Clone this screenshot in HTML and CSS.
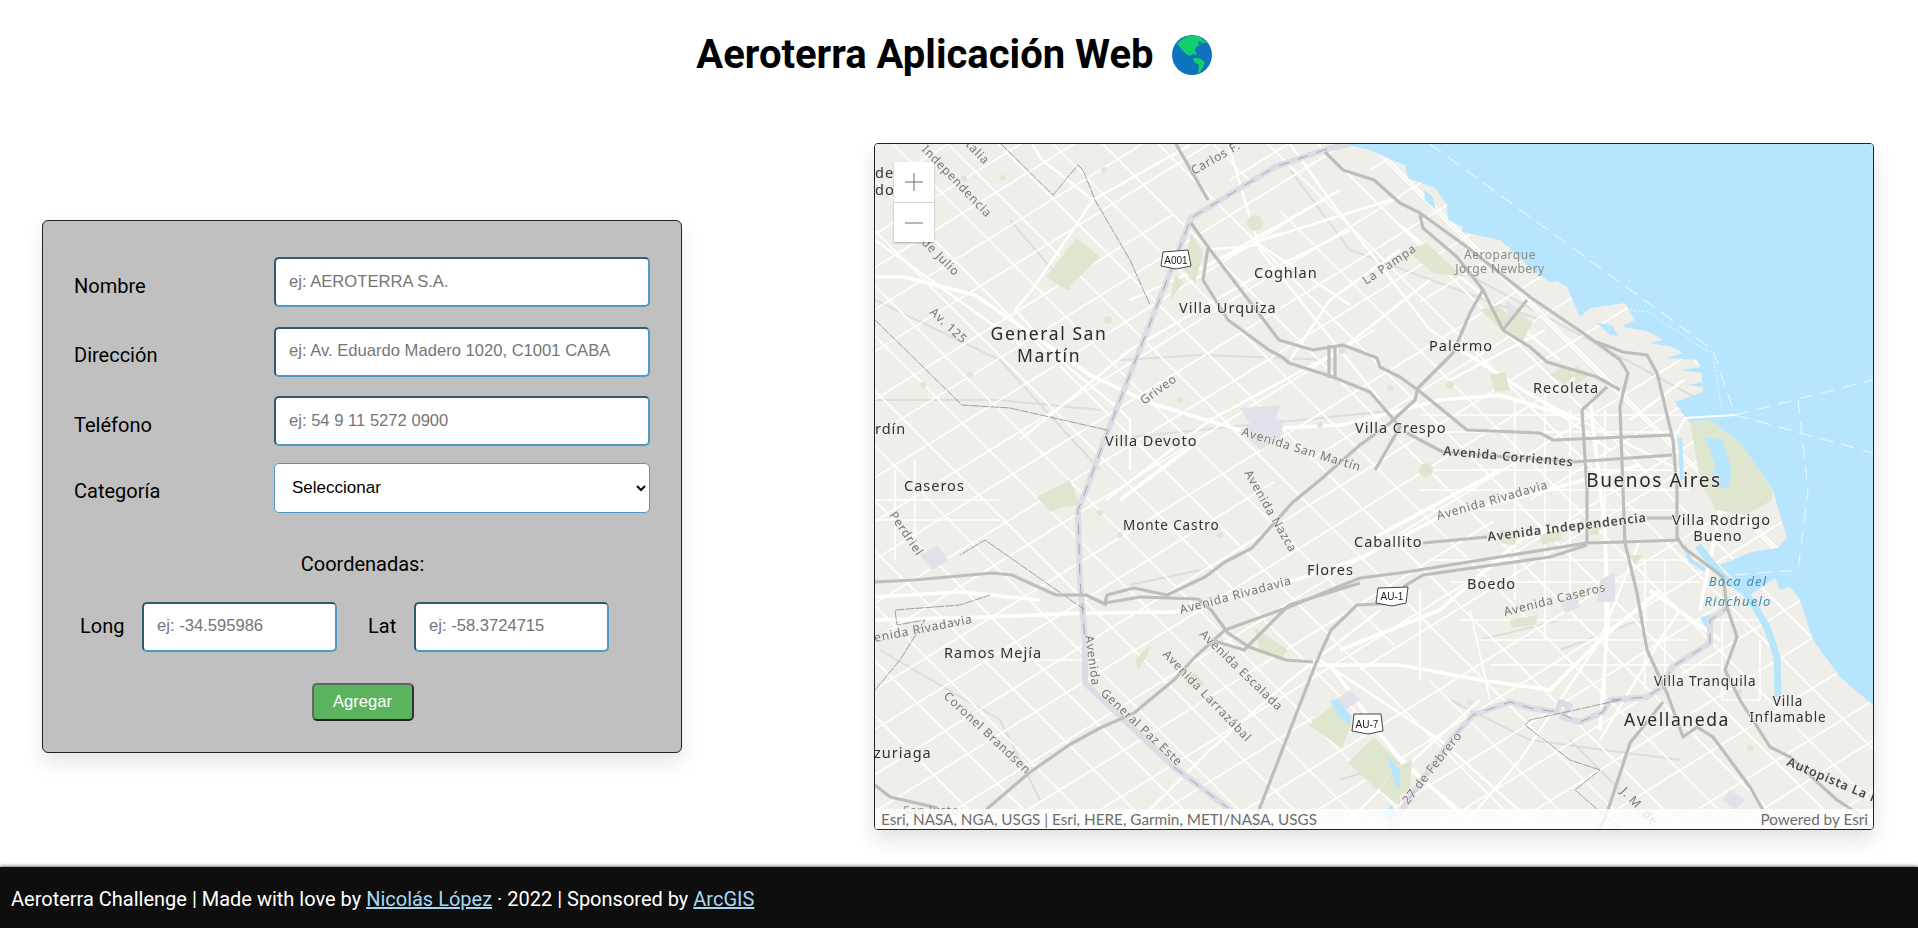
FILE: index.html
```html
<!DOCTYPE html>
<html lang="es">
<head>
<meta charset="utf-8">
<title>Aeroterra Aplicación Web</title>
<link rel="stylesheet" href="styles.css">
</head>
<body>
<header class="top">
  <h1 class="title">Aeroterra Aplicación Web
    <svg class="globe" viewBox="0 0 40 40" aria-hidden="true">
      <circle cx="20" cy="20" r="20" fill="#0f72bc"/>
      <path fill="#12cf6e" d="M5 9 9 5 17 .5 27 1.5 35 8 30 8 27 6 26 9 29 10 25 11 23 15 25 20 21 19 18 21 14 19 10 15 7 11Z"/>
      <path fill="#12cf6e" d="M21 23 27 23 33 27 31 32 28 37 26 38 27 30 22 27Z"/>
    </svg>
  </h1>
</header>
<main class="content">
  <form class="card">
    <div class="row"><label class="lab">Nombre</label><input class="field" placeholder="ej: AEROTERRA S.A."></div>
    <div class="row"><label class="lab">Dirección</label><input class="field" placeholder="ej: Av. Eduardo Madero 1020, C1001 CABA"></div>
    <div class="row"><label class="lab">Teléfono</label><input class="field" placeholder="ej: 54 9 11 5272 0900"></div>
    <div class="row pickrow"><label class="lab">Categoría</label><select class="pick"><option>Seleccionar</option></select></div>
    <p class="coord">Coordenadas:</p>
    <div class="pair">
      <label class="sub">Long</label><input class="field small" placeholder="ej: -34.595986">
      <label class="sub lat">Lat</label><input class="field small" placeholder="ej: -58.3724715">
    </div>
    <div class="actions"><button class="add" type="button">Agregar</button></div>
  </form>
  <section class="map">
    <svg class="base" viewBox="875 144 998 685" width="998" height="685" aria-label="Mapa de Buenos Aires">
      <rect x="875" y="144" width="998" height="685" fill="#efeee8"/>
      <g class="rail">
        <path d="M875 300 1000 360 1100 470M1010 220 1070 290M1120 360 1200 355 1330 360M875 400 1000 400 1100 410M1100 440 1400 410M1290 170 1350 250 1540 320M1460 270 1700 400M880 650 1000 720 1040 800M1200 570 1130 585M1480 640 1560 620M1560 650 1640 620M1450 700 1530 740 1680 760M1570 740 1620 790M1340 780 1400 760"/>
      </g>
      <g class="street s1">
        <path d="M874 190l400-248M874 235l500-310M874 268l640-397M874 310l420-260M1320 24l200-124M874 352l800-496M874 400l300-186M1230 180l400-248M874 436l880-546M874 478l460-285M1370 170l420-260M874 522l1000-620M874 560l620-384M1530 155l340-211M874 604l1000-620M874 640l500-310M1420 302l450-279M874 690l1000-620M874 730l400-248M1310 460l560-347M874 775l1000-620M874 812l700-434M874 860l1000-620M874 905l620-384M1530 500l340-211M874 950l1000-620M874 990l440-273M1360 670l510-316M874 1040l1000-620M874 1085l1000-620M874 1130l1000-620M874 1175l1000-620M874 1220l1000-620M874 1270l1000-620M874 1320l1000-620M874 1360l1000-620M874 1410l1000-620M874 1450l1000-620"/>
        <path d="M874-950l1000 1000M874-890l1000 1000M874-840l1000 1000M874-780l1000 1000M874-730l1000 1000M874-675l1000 1000M874-625l1000 1000M874-560l400 400M1310-130l450 450M874-510l1000 1000M874-460l1000 1000M874-405l400 400M1310 85l500 500M874-355l1000 1000M874-300l1000 1000M874-250l1000 1000M874-195l380 380M1280 211l590 590M874-140l1000 1000M874-85l1000 1000M874-35l1000 1000M874 20l1000 1000M874 70l1000 1000M874 125l520 520M1430 681l420 420M874 180l1000 1000M874 230l1000 1000M874 285l1000 1000M874 335l1000 1000M874 390l1000 1000M874 445l1000 1000M874 500l1000 1000M874 550l1000 1000M874 605l1000 1000M874 660l1000 1000M874 715l1000 1000"/>
        <path d="M1420 415H1690M1420 432H1680M1420 470H1680M1420 490H1690M1420 510H1680M1430 560H1700M1450 582H1700M1460 620H1720M1480 640H1690M1490 665H1720M1515 400V600M1545 390V640M1570 410V610M1605 410V700M1645 560V690M1665 560V680M895 470V560M915 460V540M875 500H1000M875 520H1000M1000 660H1100M1420 590V680M1470 610 1490 700M1722 620V700M1760 640V700M1722 620H1760M1722 700H1760"/>
      </g>
      <g class="street s2">
        <path d="M1032 144 1042 160 1093 200 1032 290 1015 310 1066 365 1120 410 1130 420 1130 470M1228 144 1260 250 1300 300 1380 400M1290 144 1330 200 1430 330 1540 400 1610 450M875 240 1000 330 1020 345M1093 200 1190 145M1130 300 1262 240 1400 197M1205 250 1260 245 1350 305M1200 270 1340 190M1400 225 1470 285 1560 360M1460 350 1530 395 1600 430 1680 470M1020 440 1130 350 1250 280 1350 230M1106 500 1210 420 1340 350 1430 280M1290 360 1330 300 1400 250M1450 380 1545 330M1630 420 1684 380M1640 540 1600 640 1560 700 1520 760 1460 829M1320 660 1440 740 1540 829M1680 610 1660 640 1600 740M1380 610 1290 680 1210 750 1130 829M1480 700 1380 790 1340 829"/>
      </g>
      <g class="street s3">
        <path d="M875 277 904 277 975 295 1040 340 1090 375 1150 403 1240 430 1342 425 1440 400 1500 395 1580 420M875 620 985 617 1086 613 1174 612 1295 580 1363 557 1438 518 1547 490 1640 465M875 597 960 592 1040 600M1120 500 1200 440M1370 540 1500 470M1590 400 1605 530 1608 620 1600 730M1310 665 1400 665 1480 680 1550 690 1600 640 1660 590M1650 590 1720 640M1480 829 1400 760 1330 665M1340 650 1440 610 1520 540 1580 520M1720 510 1700 610"/>
      </g>
      <g class="park">
        <path d="M1046 277 1076 238 1100 257 1066 290ZM1191 233 1203 253 1195 283 1184 270ZM1175 275 1184 282 1170 300ZM1407 250 1427 243 1453 268 1467 277 1433 273ZM1480 310 1497 305 1512 317 1502 330ZM1507 330 1518 313 1533 322 1523 340ZM1036 497 1070 480 1080 505 1060 508 1050 512ZM1308 725 1337 702 1352 723 1342 748ZM1348 763 1374 737 1400 763 1377 790ZM1379 790 1400 763V805ZM1260 650 1255 628 1288 650 1280 660ZM1185 680 1195 672 1205 685 1195 690ZM1135 660 1150 645 1148 655 1138 670ZM1490 375 1505 372 1510 390 1495 392ZM1550 375 1565 365 1575 375 1565 385ZM1575 365 1590 375 1575 385ZM1540 535 1560 530 1562 540 1542 545ZM1500 530 1520 530 1515 545 1500 543ZM1628 555 1642 555 1636 565ZM1510 620 1538 615 1535 625 1512 628ZM1590 520 1600 520 1598 535 1590 535ZM1390 770 1412 760 1410 790 1390 800Z"/>
        <circle cx="1255" cy="223" r="8"/><circle cx="1426" cy="470" r="7"/><circle cx="1108" cy="320" r="4"/><circle cx="1003" cy="178" r="3"/><circle cx="964" cy="179" r="3"/><circle cx="1104" cy="170" r="3"/><circle cx="970" cy="375" r="3"/><circle cx="923" cy="385" r="3"/><circle cx="1180" cy="400" r="3"/><circle cx="1320" cy="425" r="3"/><circle cx="1390" cy="388" r="3"/><circle cx="1450" cy="385" r="4"/><circle cx="1342" cy="350" r="4"/><circle cx="1100" cy="513" r="3"/><circle cx="1120" cy="535" r="3"/><circle cx="1220" cy="535" r="3"/><circle cx="1750" cy="500" r="3"/><circle cx="1470" cy="702" r="3"/><circle cx="1739" cy="692" r="3"/><circle cx="1750" cy="748" r="3"/>
      </g>
      <g class="lilac">
        <path d="M1505 300 1520 310 1510 320ZM1240 430l26-12 18 2-4 20-20 10ZM1600 580l15-8v30l-18 0ZM920 555l18-10 10 15-16 10ZM1335 700 1350 690 1360 700 1345 710ZM1560 600l15-5 5 12-15 6ZM1730 790l15 10-10 10-12-10Z"/>
        <path d="M1240 408 1280 405 1272 430 1255 432Z"/>
      </g>
      <path class="water" d="M1345 144 1352 146 1370 150 1392 160 1405 165 1408 178 1435 188 1447 205 1448 220 1463 227 1462 232 1500 240 1535 272 1550 282 1557 281 1567 287 1580 317 1590 308 1625 303 1635 320 1622 327 1647 331 1663 340 1650 343 1673 347 1683 353 1667 358 1697 360 1700 367 1680 370 1702 373 1702 382 1688 385 1703 387 1703 392 1675 402 1685 417 1690 422 1710 420 1740 443 1773 490 1780 515 1787 537 1778 548 1752 552 1745 565 1775 578 1780 590 1790 587 1800 600 1813 640 1840 677 1873 705 1874 705 1874 144Z"/>
      <path class="water" d="M1597 323 1612 325 1618 336 1610 335ZM1720 565 1752 552 1775 578 1750 595ZM1424 190 1432 196 1436 210 1425 200ZM1330 700 1338 700 1352 717 1350 725 1338 715ZM1387 755 1400 770V790L1395 785ZM1380 815 1392 805 1400 825ZM1700 617 1712 615 1712 628 1705 626Z"/>
      <path class="channel" d="M1698 546 1723 577 1745 592 1757 610 1767 627 1777 657 1778 697"/>
      <path class="channel thin" d="M1680 438 1682 480M1684 545 1690 560 1705 570"/>
      <path class="park" d="M1690 422 1710 420 1740 443 1773 490 1772 500 1745 515 1715 510 1700 480 1695 450Z"/>
      <path class="water" d="M1705 437 1722 440 1732 470 1728 488 1710 488 1715 465Z"/>
      <g class="limit">
        <path class="dash" d="M1430 144 1713 350 1735 415M1735 415 1873 380M1735 415 1873 453M1798 400 1808 490 1798 570 1735 575"/>
        <path class="solid" d="M1672 442 1685 418 1735 415"/>
        <path class="thinl" d="M1630 310 1650 312 1670 328M1670 326 1705 350 1712 352 1722 410"/>
      </g>
      <path class="border" d="M1390 829 1408 800 1453 737 1473 715 1510 702 1530 708 1557 712 1560 702 1570 706 1562 717 1580 722 1603 712 1610 700 1647 697 1662 687 1672 667 1710 643 1710 620 1727 608"/>
      <path class="border" d="M1350 144 1327 149 1275 167 1191 218 1171 270 1107 433 1086 490 1078 510 1080 580 1085 640 1085 683 1174 767 1228 808 1255 829"/>
      <path class="dashc" d="M1408 800 1453 737 1473 715 1510 702 1530 708 1557 712 1580 722 1603 712 1610 700 1647 697 1662 687 1672 667 1710 643 1710 620 1727 608"/>
      <path class="dashc" d="M1327 149 1275 167 1191 218 1171 270 1107 433 1086 490 1078 510 1080 580 1085 640M1174 767 1228 808"/>
      <path class="admin" d="M1001 144 1053 195 1078 165 1083 170 1095 200 1130 260 1150 305M875 320 962 405 1010 408 1107 430M1085 610 985 540 960 555M875 690 900 660 925 620 897 625 895 610 960 605 990 595M1620 700 1530 720 1525 725 1570 760 1600 770 1575 790 1620 829"/>
      <g class="hw">
        <path d="M1176 144 1208 200M1325 152 1343 170 1374 180 1400 203 1420 213 1467 247 1530 297 1583 333 1597 343 1620 360 1628 373 1623 393 1620 407 1623 490 1625 543 1637 593 1647 650 1667 693 1683 737 1697 727 1713 737 1750 787 1763 810 1775 829"/>
        <path d="M1597 342 1623 352 1647 355 1657 373 1673 440 1677 490 1677 537 1683 547 1723 577 1727 607 1737 637 1725 670 1740 700 1770 747 1790 757 1837 800 1857 813 1873 829"/>
        <path d="M1420 215 1423 228 1457 257 1483 290 1470 313 1453 353 1418 388 1415 400 1390 423 1360 445 1320 480 1292 503 1252 548 1225 562 1205 577 1167 595 1134 588 1107 595 1105 603 1140 597 1198 599 1211 610 1228 633 1249 647 1286 660 1313 662"/>
        <path d="M875 582 914 580 992 573 1012 575 1056 595 1086 595 1107 605"/>
        <path d="M1191 223 1208 247 1203 280 1228 320 1269 350 1282 357 1289 363 1333 377 1370 392 1400 427 1375 470"/>
        <path d="M1208 247 1279 340 1313 350 1343 345 1377 358 1380 367 1400 377 1418 390 1467 430 1540 433 1553 440 1673 435"/>
        <path d="M1329 345 1329 378M1335 345 1335 378"/>
        <path d="M1483 290 1503 330 1530 347 1547 362 1597 377 1620 390M1527 300 1503 330"/>
        <path d="M1407 433 1443 452 1573 462 1672 455M1582 410 1607 387M1582 410 1587 490 1587 543"/>
        <path d="M1423 543 1487 537M1647 518 1677 518"/>
        <path d="M875 785 890 797 938 808M1400 573 1587 543 1623 542 1680 540"/>
        <path d="M1403 587 1423 575 1550 557 1587 545"/>
        <path d="M1397 603 1357 605 1331 630 1316 663 1259 810 1252 833"/>
        <path d="M1400 573 1360 578 1289 607 1225 630 1195 657 1174 680 1134 713 1100 728 1069 745 1029 773 988 808 971 829"/>
        <path d="M1360 583 1289 605 1244 650 1211 640"/>
        <path d="M1663 702 1630 743 1607 813 1600 829"/>
      </g>
      <g class="shield">
        <path d="M1163 252 1188 250 1191 266 1176 269 1161 266Z"/>
        <path d="M1378 588 1408 587 1406 603 1392 606 1376 603Z"/>
        <path d="M1354 714 1381 714 1383 731 1368 734 1352 731Z"/>
      </g>
      <text class="sh" x="1176" y="264" text-anchor="middle">A001</text>
      <text class="sh" x="1392" y="600" text-anchor="middle">AU-1</text>
      <text class="sh" x="1367" y="728" text-anchor="middle">AU-7</text>

      <g class="big">
        <text x="1049" y="340" text-anchor="middle">General San</text>
        <text x="1049" y="362" text-anchor="middle">Martín</text>
        <text class="huge" x="1654" y="487" text-anchor="middle">Buenos Aires</text>
        <text x="1677" y="726" text-anchor="middle">Avellaneda</text>
      </g>
      <g class="city">
        <text x="875" y="178">de</text><text x="875" y="195">dor</text><text x="875" y="434">rdín</text>
        <text x="1254" y="278">Coghlan</text>
        <text x="1179" y="313">Villa Urquiza</text>
        <text x="1105" y="446">Villa Devoto</text>
        <text x="904" y="491">Caseros</text>
        <text x="1429" y="351">Palermo</text>
        <text x="1533" y="393">Recoleta</text>
        <text x="1355" y="433">Villa Crespo</text>
        <text x="1672" y="525">Villa Rodrigo</text>
        <text x="1718" y="541" text-anchor="middle">Bueno</text>
        <text x="1467" y="589">Boedo</text>
        <text x="1354" y="547">Caballito</text>
        <text x="1307" y="575">Flores</text>
        <text class="tiny" x="1123" y="530">Monte Castro</text>
        <text x="944" y="658">Ramos Mejía</text>
        <text x="874" y="758">zuriaga</text>
        <text class="tiny" x="1654" y="686">Villa Tranquila</text>
        <text class="tiny" x="1788" y="706" text-anchor="middle">Villa</text>
        <text class="tiny" x="1788" y="722" text-anchor="middle">Inflamable</text>
      </g>
      <g class="air">
        <text x="1500" y="259" text-anchor="middle">Aeroparque</text>
        <text x="1500" y="273" text-anchor="middle">Jorge Newbery</text>
        <text x="903" y="815">San Justo</text>
      </g>
      <g class="wat">
        <text x="1738" y="586" text-anchor="middle">Boca del</text>
        <text x="1738" y="606" text-anchor="middle">Riachuelo</text>
      </g>
      <g class="road">
        <text transform="translate(965 145) rotate(46)">talia</text>
        <text transform="translate(921 150) rotate(46)">Independencia</text>
        <text transform="translate(921 243) rotate(45)">de Julio</text>
        <text transform="translate(929 313) rotate(43)">Av. 125</text>
        <text transform="translate(1194 175) rotate(-30)">Carlos F.</text>
        <text transform="translate(1144 405) rotate(-36)">Griveo</text>
        <text transform="translate(1241 435) rotate(17)">Avenida San Martín</text>
        <text transform="translate(1366 285) rotate(-34)">La Pampa</text>
        <text transform="translate(1438 520) rotate(-16)">Avenida Rivadavia</text>
        <text transform="translate(1505 616) rotate(-14)">Avenida Caseros</text>
        <text transform="translate(875 642) rotate(-11)">enida Rivadavia</text>
        <text transform="translate(1181 614) rotate(-15)">Avenida Rivadavia</text>
        <text transform="translate(889 515) rotate(56)">Perdriel</text>
        <text transform="translate(1244 473) rotate(60)">Avenida Nazca</text>
        <text transform="translate(1085 636) rotate(82)">Avenida</text>
        <text transform="translate(1100 694) rotate(43)">General Paz Este</text>
        <text transform="translate(1199 635) rotate(44)">Avenida Escalada</text>
        <text transform="translate(1162 655) rotate(46)">Avenida Larrazábal</text>
        <text transform="translate(943 697) rotate(43)">Coronel Brandsen</text>
        <text transform="translate(1408 805) rotate(-52)">27 de Febrero</text>
        <text transform="translate(1620 792) rotate(46)">J. M. de</text>
      </g>
      <g class="road strong">
        <text transform="translate(1443 455) rotate(5)">Avenida Corrientes</text>
        <text transform="translate(1488 541) rotate(-7)">Avenida Independencia</text>
        <text transform="translate(1786 765) rotate(23)">Autopista La P</text>
      </g>
    </svg>
    <div class="zoombox">
      <button class="zb" type="button" aria-label="Acercar"><svg width="18" height="18" viewBox="0 0 18 18"><path d="M0 9H18M9 0V18"/></svg></button>
      <button class="zb" type="button" aria-label="Alejar"><svg width="18" height="18" viewBox="0 0 18 18"><path d="M0 9H18"/></svg></button>
    </div>
    <div class="attr"><span>Esri, NASA, NGA, USGS | Esri, HERE, Garmin, METI/NASA, USGS</span><span>Powered by Esri</span></div>
  </section>
</main>
<footer class="foot">Aeroterra Challenge | Made with love by&nbsp;<a href="#">Nicolás López</a>&nbsp;· 2022 | Sponsored by&nbsp;<a href="#">ArcGIS</a></footer>
</body>
</html>
```
FILE: styles.css
```css
* { box-sizing: border-box; }
html, body { margin: 0; height: 100%; }
body { display: flex; flex-direction: column; height: 928px; overflow: hidden; background: #fff; font-family: Roboto, sans-serif; color: #000; }
.top { height: 108px; flex: none; }
.title { margin: 0; padding: 1px 10px 0 0; display: flex; justify-content: center; align-items: center; gap: 18px; font: 700 40px/108px Roboto, sans-serif; }
.globe { width: 40px; height: 40px; flex: none; }
.content { flex: none; display: flex; justify-content: space-between; align-items: center; padding: 35px 44px 0 42px; }
.card { width: 640px; height: 533px; padding: 36px 30px 0 31px; background: #c0c0c0; border: 1px solid #222; border-radius: 6px; box-shadow: 0 10px 20px rgba(0,0,0,.1); }
.row { display: flex; align-items: center; height: 50px; margin-bottom: 19.5px; }
.pickrow { margin-top: -3px; }
.lab { width: 200px; font-size: 20px; padding-top: 7px; }
.field { width: 376px; height: 50px; padding: 0 13px 1px; border-width: 2px; border-style: solid; border-color: #2f5a70 #4d9ac4 #4d9ac4 #2f5a70; border-radius: 5px; background: #fff; font: 16.6px "Liberation Sans", Arial, sans-serif; outline: none; }
.field::placeholder { color: #757575; }
.pick { width: 376px; height: 50px; padding: 0 13px; border: 1px solid #4d9ac4; border-radius: 5px; background: #fff; color: #000; font: 17px "Liberation Sans", Arial, sans-serif; }
.coord { margin: 39px 0 0; text-align: center; font-size: 20px; line-height: 24px; }
.pair { display: flex; align-items: center; margin-top: 26px; padding-left: 6px; }
.sub { font-size: 20px; width: 62px; padding-bottom: 2px; }
.lat { width: 77px; padding-left: 31px; }
.small { width: 195px; }
.actions { display: flex; justify-content: center; margin-top: 31px; }
.add { width: 102px; height: 38px; background: #5cb35d; color: #fff; font: 16.6px "Liberation Sans", Arial, sans-serif; border-width: 2px; border-style: solid; border-color: #666 #333 #222 #666; border-radius: 5px; }
.map { position: relative; width: 1000px; height: 687px; border: 1px solid #222; border-radius: 4px; overflow: hidden; box-shadow: 0 10px 20px rgba(0,0,0,.12); }
.base { display: block; filter: blur(.35px); }
.street, .rail, .limit path, .hw, .border, .dashc, .admin, .channel { fill: none; }
.rail { stroke: #dedddb; stroke-width: 2; }
.street { stroke: #fff; stroke-linejoin: round; }
.s1 { stroke-width: 1.6; }
.s2 { stroke-width: 2.4; }
.s3 { stroke-width: 3.6; }
.park { fill: #dfe6cf; }
.lilac { fill: #e2e1e9; }
.water { fill: #b6e5fd; }
.channel { stroke: #b6e5fd; stroke-width: 7; }
.thin { stroke-width: 4; }
.dash { stroke: #e4f5fe; stroke-width: 1.2; stroke-dasharray: 14 8; }
.solid { stroke: #fff; stroke-width: 2; }
.thinl { stroke: #f3fbff; stroke-width: .8; stroke-dasharray: 2 2; }
.border { stroke: #dfdbe4; stroke-width: 6; stroke-linejoin: round; }
.dashc { stroke: #99979e; stroke-width: .8; stroke-dasharray: 11 9; }
.admin { stroke: #8b8b88; stroke-width: .8; stroke-dasharray: 9 1; }
.hw { stroke: #bdbdba; stroke-width: 3.2; stroke-linejoin: round; }
.shield { fill: #fff; stroke: #444; stroke-width: 1; }
.sh { font: 10px "Liberation Sans", Arial, sans-serif; fill: #222; }
.big text, .city text, .air text, .wat text, .road text { font-family: "Noto Sans", sans-serif; paint-order: stroke; stroke-linejoin: round; }
.big text { font-size: 17.5px; letter-spacing: 1.6px; fill: #2b2b2b; stroke: #efeee8; stroke-width: 2px; }
.big .huge { font-size: 19px; letter-spacing: 1.6px; }
.city text { font-size: 14.5px; letter-spacing: 1px; fill: #333; stroke: #efeee8; stroke-width: 2px; }
.city .tiny { font-size: 13.5px; letter-spacing: .9px; }
.air text { font-size: 12px; letter-spacing: .5px; fill: #8a8a88; }
.wat text { font-size: 13px; font-style: italic; letter-spacing: 1.2px; fill: #3e8fb3; }
.road text { font-size: 12px; letter-spacing: .8px; fill: #777; stroke: #efeee8; stroke-width: 1.5px; }
.road.strong text { font-size: 12.5px; font-weight: 600; fill: #4a4a4a; }
.zoombox { position: absolute; left: 19px; top: 18px; width: 40px; box-shadow: 0 1px 2px rgba(0,0,0,.3); }
.zb { display: flex; align-items: center; justify-content: center; width: 40px; height: 40px; padding: 0; background: #fff; border: 0; }
.zb + .zb { border-top: 1px solid #d4d4d4; }
.zb svg path { stroke: #6e6e6e; stroke-width: 1; fill: none; }
.attr { position: absolute; left: 0; right: 0; bottom: 0; height: 20px; display: flex; justify-content: space-between; padding: 0 5px 0 6px; background: rgba(255,255,255,.8); color: #6e6e6e; font: 15.3px/20px Lato, sans-serif; }
.foot { flex: none; margin-top: auto; height: 61px; padding: 3px 0 0 11px; display: flex; align-items: center; white-space: pre; background: #0e0e0e; box-shadow: 0 -1px 3px rgba(0,0,0,.55); color: #fff; font-size: 20px; }
.foot a { color: #a5d8f3; }
```
